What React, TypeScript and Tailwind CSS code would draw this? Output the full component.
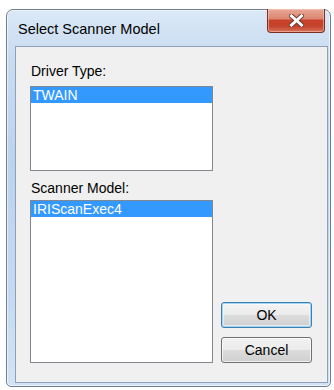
import React from "react";

const FONT = { fontFamily: '"Liberation Sans", Arial, sans-serif' };

function CloseButton() {
  return (
    <button
      className="flex h-[24px] w-[58px] items-center justify-center rounded-b-[4px] border border-t-0 border-[#7a2f24] bg-[linear-gradient(to_bottom,#eaa898_0%,#dc8670_42%,#c8412a_50%,#c4432c_75%,#d9735a_100%)] shadow-[inset_0_0_0_1px_rgba(255,220,210,0.45)]"
      aria-label="Close"
    >
      <svg width="15" height="13" viewBox="0 0 15 13">
        <path
          d="M2.5 2 L12.5 11 M12.5 2 L2.5 11"
          stroke="#6b3a32"
          strokeWidth="5"
          strokeLinecap="square"
        />
        <path
          d="M2.5 2 L12.5 11 M12.5 2 L2.5 11"
          stroke="#ffffff"
          strokeWidth="3"
          strokeLinecap="square"
        />
      </svg>
    </button>
  );
}

function ListBox({ height, item }: { height: string; item: string }) {
  return (
    <div className={`${height} w-[183px] border border-[#828790] bg-white`}>
      <div className="h-[16px] bg-[#3399ff] pl-[2px] text-[14px] leading-[16px] text-white">
        {item}
      </div>
    </div>
  );
}

function DialogButton({
  label,
  isDefault,
}: {
  label: string;
  isDefault?: boolean;
}) {
  return (
    <button
      className={
        isDefault
          ? "h-[26px] w-[91px] rounded-[3px] border border-[#3c7fb1] bg-[linear-gradient(to_bottom,#f4f4f4_0%,#ebebeb_50%,#dddddd_50%,#cfcfcf_100%)] text-[14px] leading-[16px] text-black shadow-[inset_0_0_0_1px_#9fd4f2,inset_0_0_0_2px_rgba(255,255,255,0.5)]"
          : "h-[26px] w-[91px] rounded-[3px] border border-[#707070] bg-[linear-gradient(to_bottom,#f2f2f2_0%,#ebebeb_50%,#dddddd_50%,#cfcfcf_100%)] text-[14px] leading-[16px] text-black shadow-[inset_0_0_0_1px_rgba(255,255,255,0.7)]"
      }
    >
      {label}
    </button>
  );
}

export default function App() {
  return (
    <div className="h-[390px] w-[334px] bg-white pl-[6px] pt-[9px]" style={FONT}>
      {/* window frame */}
      <div className="flex h-[378px] w-[325px] flex-col rounded-t-[7px] rounded-b-[5px] border border-[#6f7f93] bg-[linear-gradient(to_bottom,#dbe8f6_0%,#c9dcf1_12%,#bcd3ee_40%,#c5daf1_75%,#d2e3f4_100%)] pb-[3px] pl-[8px] pr-[2px] shadow-[inset_0_0_0_1px_rgba(255,255,255,0.55)]">
        {/* title bar */}
        <div className="flex h-[36px] items-start justify-between">
          <span className="pl-[3px] pt-[11px] text-[14.5px] leading-[16px] text-black">
            Select Scanner Model
          </span>
          <div className="-mt-px mr-[3px]">
            <CloseButton />
          </div>
        </div>

        {/* client area */}
        <div className="flex flex-1 gap-[8px] border border-[#8e9fb6] bg-[#f0f0f0] pb-[19px] pl-[14px] pr-[15px] pt-[16px]">
          <div className="flex flex-col">
            <div className="h-[16px] pl-px text-[14px] leading-[16px] text-black">
              Driver Type:
            </div>
            <div className="mt-[7px]">
              <ListBox height="h-[85px]" item="TWAIN" />
            </div>
            <div className="mt-[9px] h-[16px] pl-px text-[14px] leading-[16px] text-black">
              Scanner Model:
            </div>
            <div className="mt-[4px]">
              <ListBox height="h-[163px]" item="IRIScanExec4" />
            </div>
          </div>

          <div className="flex flex-col justify-end gap-[9px]">
            <DialogButton label="OK" isDefault />
            <DialogButton label="Cancel" />
          </div>
        </div>
      </div>
    </div>
  );
}
